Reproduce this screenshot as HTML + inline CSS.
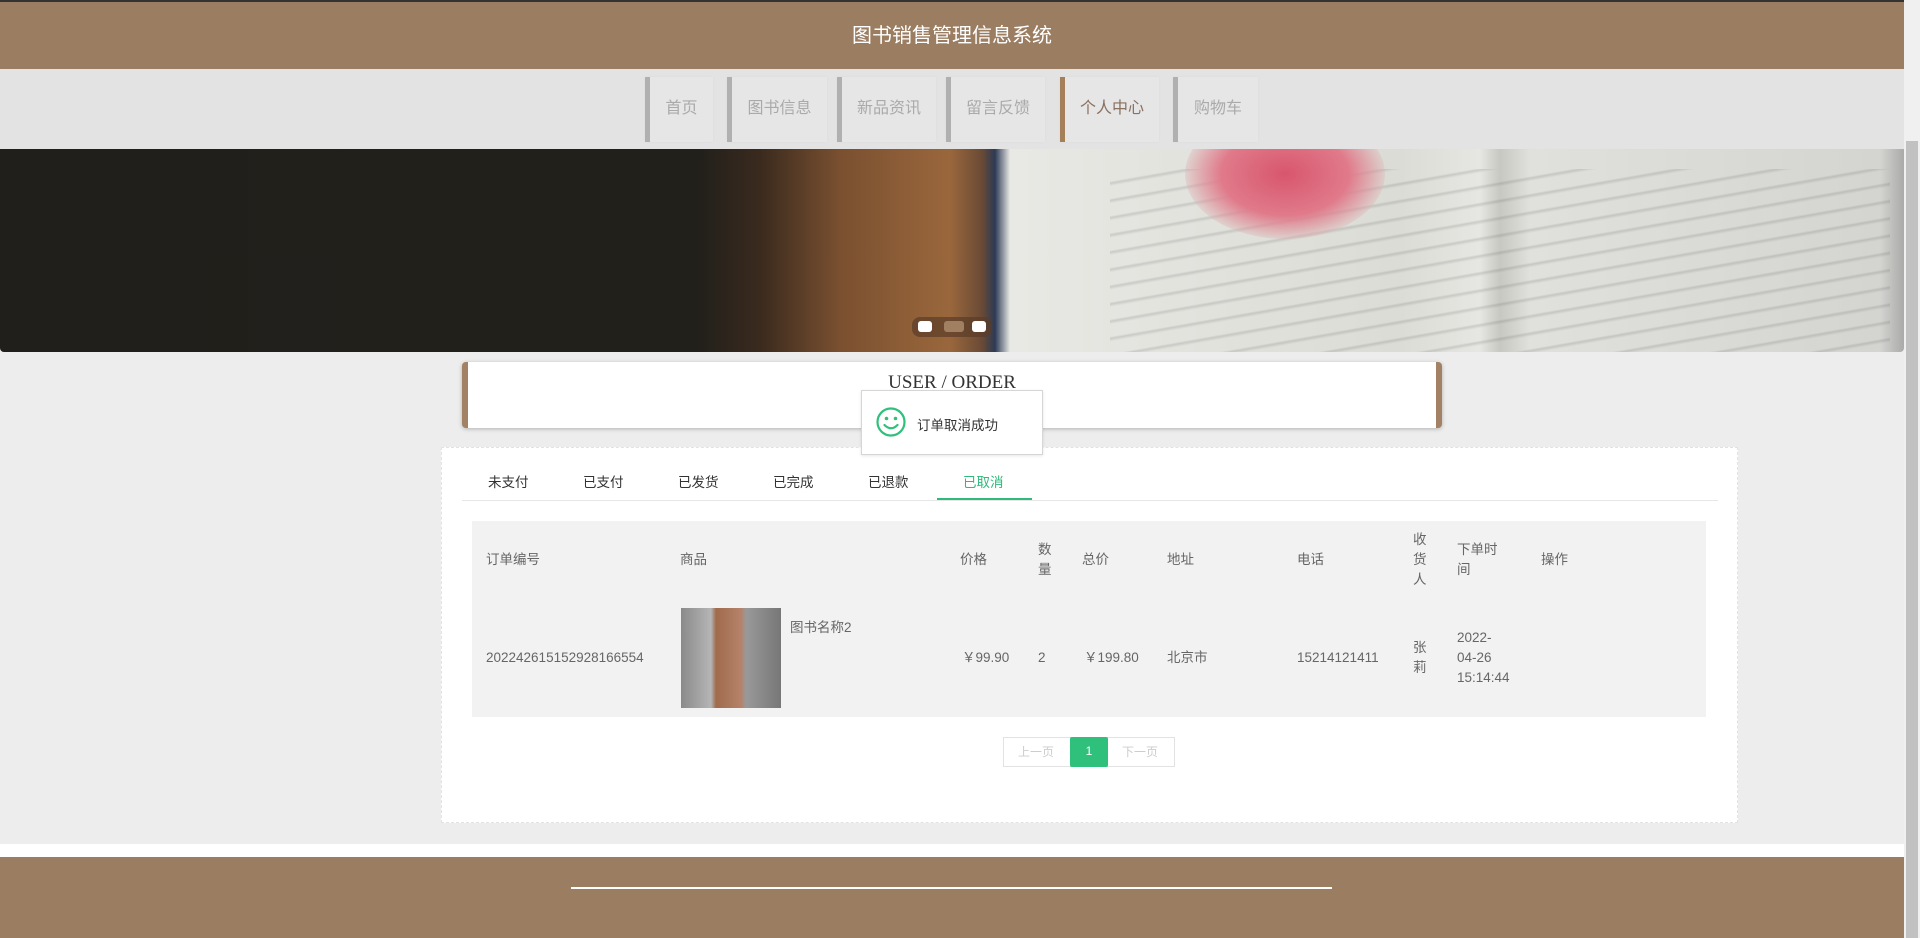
<!DOCTYPE html>
<html><head><meta charset="utf-8">
<style>
*{margin:0;padding:0;box-sizing:border-box}
html,body{width:1920px;height:938px;overflow:hidden;background:#ededed;font-family:"Liberation Sans","Noto Sans CJK SC",sans-serif;font-size:13px;color:#555}
.abs{position:absolute}
.row{position:absolute;left:0;width:1920px;height:1px}
.row span{white-space:nowrap}
.row span.v{white-space:normal}
#top{left:0;top:0;width:1904px;height:2px;background:#333}
#hdr{left:0;top:2px;width:1904px;height:67px;background:#9b7d62;color:#fff;font-size:20px;text-align:center;line-height:68px}
#nav{left:0;top:69px;width:1904px;height:80px;background:#e3e3e3}
.ni{position:absolute;top:8px;height:65px;border-left:5px solid #b0b0b0;background:#e6e6e6;color:#aaa;font-size:16px;text-align:center;line-height:64px;box-shadow:0 0 2px #ddd}
#ban{left:0;top:149px;width:1904px;height:203px;overflow:hidden;background:linear-gradient(90deg,#201f1b 0,#22201b 700px,#3a2a1e 760px,#7a5030 840px,#9a673c 950px,#6a4a35 982px,#2c3a55 995px,#e8e8e4 1010px,#dcdcd6 1400px,#e6e6e2 1480px,#c8c8c2 1500px,#e0e0dc 1530px,#d4d4d0 1880px,#aaa 1904px);border-radius:0 0 4px 4px}
#sc{right:0;top:0;width:16px;height:938px;background:#f0f0f0}
#thumb{right:2px;top:141px;width:12px;height:797px;background:#c1c1c1}
</style></head><body>
<div id="top" class="abs"></div>
<div id="hdr" class="abs">图书销售管理信息系统</div>
<div id="nav" class="abs">
<div class="ni" style="left:645px;width:68px">首页</div>
<div class="ni" style="left:727px;width:100px">图书信息</div>
<div class="ni" style="left:837px;width:99px">新品资讯</div>
<div class="ni" style="left:946px;width:99px">留言反馈</div>
<div class="ni" style="left:1060px;width:99px;border-left-color:#a57e5a;color:#8a7060">个人中心</div>
<div class="ni" style="left:1173px;width:85px">购物车</div>
</div>
<div id="ban" class="abs">
<div class="abs" style="left:1110px;top:20px;width:780px;height:183px;background:repeating-linear-gradient(170deg,transparent 0,transparent 12px,rgba(80,80,80,.18) 14px,transparent 17px)"></div>
<div class="abs" style="left:1185px;top:-40px;width:200px;height:130px;border-radius:50%;background:radial-gradient(ellipse,#d8566e 0,#e07a8a 45%,rgba(220,180,180,.4) 70%,transparent 75%)"></div>
<div class="abs" style="left:912px;top:168px;width:80px;height:20px;border-radius:8px;background:rgba(90,60,40,.7)"></div>
<div class="abs" style="left:918px;top:172px;width:14px;height:11px;border-radius:3px;background:#fff"></div>
<div class="abs" style="left:944px;top:172px;width:20px;height:11px;border-radius:3px;background:#a08060"></div>
<div class="abs" style="left:972px;top:172px;width:14px;height:11px;border-radius:3px;background:#fff"></div>
</div>

<div class="abs" style="left:462px;top:362px;width:980px;height:66px;background:#fff;border-left:6px solid #a28165;border-right:6px solid #a28165;border-radius:4px;box-shadow:0 1px 4px rgba(0,0,0,.25);text-align:center;font-family:'Liberation Serif',serif;font-size:19px;color:#333;padding-top:10px">USER / ORDER</div>

<div class="abs" style="left:441px;top:447px;width:1297px;height:376px;background:#fff;border:1px dashed #e2e2e2"></div>
<div class="abs" style="left:462px;top:500px;width:1256px;height:1px;background:#e6e6e6"></div>
<div class="row" style="top:471px;font-size:13.5px;color:#333">
<span class="abs" style="left:488px">未支付</span><span class="abs" style="left:583px">已支付</span><span class="abs" style="left:678px">已发货</span><span class="abs" style="left:773px">已完成</span><span class="abs" style="left:868px">已退款</span><span class="abs" style="left:963px;color:#2fb97a">已取消</span></div>
<div class="abs" style="left:937px;top:498px;width:95px;height:2px;background:#2fb97a"></div>

<div class="abs" style="left:472px;top:521px;width:1234px;height:196px;background:#f2f2f2"></div>
<div class="row" style="top:550px;font-size:13.5px;color:#666;line-height:20px">
<span class="abs" style="left:486px">订单编号</span><span class="abs" style="left:680px">商品</span><span class="abs" style="left:960px">价格</span>
<span class="abs v" style="left:1038px;top:-10px;width:14px">数量</span><span class="abs" style="left:1082px">总价</span><span class="abs" style="left:1167px">地址</span><span class="abs" style="left:1297px">电话</span>
<span class="abs v" style="left:1413px;top:-20px;width:14px">收货人</span><span class="abs v" style="left:1457px;top:-10px;width:45px">下单时间</span><span class="abs" style="left:1541px">操作</span></div>
<div class="abs" style="left:681px;top:608px;width:100px;height:100px;background:linear-gradient(90deg,#8a8a8a,#b5b5b5 30%,#a06b4c 35%,#b5826a 60%,#999 65%,#777)"></div>
<div class="row" style="top:648px;font-size:13.5px;color:#666;line-height:20px">
<span class="abs" style="left:790px;top:-30px">图书名称2</span>
<span class="abs" style="left:486px">202242615152928166554</span><span class="abs" style="left:962px">￥99.90</span><span class="abs" style="left:1038px">2</span><span class="abs" style="left:1084px">￥199.80</span><span class="abs" style="left:1167px">北京市</span><span class="abs" style="left:1297px">15214121411</span>
<span class="abs v" style="left:1413px;top:-10px;width:14px">张莉</span><span class="abs v" style="left:1457px;top:-20px;width:80px">2022-<br>04-26<br>15:14:44</span></div>

<div class="abs" style="left:1003px;top:737px;width:172px;height:30px;border:1px solid #e2e2e2;font-size:12px;color:#ccc;line-height:28px;white-space:nowrap">
<span class="abs" style="left:14px">上一页</span>
<span class="abs" style="left:66px;top:-1px;width:38px;height:30px;background:#2fc17c;color:#fff;text-align:center;border-radius:2px">1</span>
<span class="abs" style="left:118px">下一页</span></div>

<div class="abs" style="left:0;top:844px;width:1904px;height:13px;background:#fff"></div>
<div class="abs" style="left:0;top:857px;width:1904px;height:81px;background:#9b7d62"></div>
<div class="abs" style="left:571px;top:887px;width:761px;height:2px;background:#fff"></div>

<div class="abs" style="left:861px;top:390px;width:182px;height:65px;background:#fff;border:1px solid #d6d6d6;box-shadow:0 1px 3px rgba(0,0,0,.1)"></div>
<svg class="abs" style="left:876px;top:406px" width="30" height="32" viewBox="0 0 30 32"><circle cx="15" cy="16" r="13.5" fill="none" stroke="#2fc17c" stroke-width="2.2"/><circle cx="10.5" cy="12.5" r="1.8" fill="#2fc17c"/><circle cx="19.5" cy="12.5" r="1.8" fill="#2fc17c"/><path d="M8.5 19 Q15 25.5 21.5 19" fill="none" stroke="#2fc17c" stroke-width="2.2" stroke-linecap="round"/></svg>
<div class="abs" style="left:917px;top:414px;font-size:13.5px;color:#333;white-space:nowrap">订单取消成功</div>

<div id="sc" class="abs"></div><div id="thumb" class="abs"></div>
</body></html>
